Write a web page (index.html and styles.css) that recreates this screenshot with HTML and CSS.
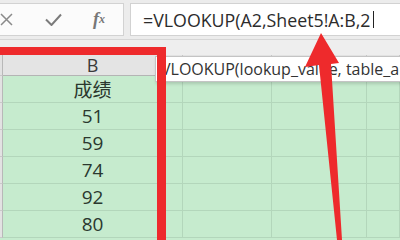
FILE: index.html
```html
<!DOCTYPE html>
<html>
<head>
<meta charset="utf-8">
<link rel="stylesheet" href="styles.css">
</head>
<body>
<div class="app">
  <div class="fbar">
    <div class="icons">
      <span class="ic ic-x"><svg width="13" height="13" viewBox="0 0 13 13"><path d="M1 1 L12 12 M12 1 L1 12" stroke="#8a8a8a" stroke-width="1.5" fill="none"/></svg></span>
      <span class="ic ic-ok"><svg width="17" height="13" viewBox="0 0 17 13"><path d="M1 6.5 L6.5 12 L16 1.5" stroke="#7b7b7b" stroke-width="2" fill="none"/></svg></span>
      <span class="ic ic-fx">f<small>x</small></span>
    </div>
    <div class="formula"><span class="ftext">=VLOOKUP(A2,Sheet5!A:B,2</span><span class="caret"></span></div>
  </div>
  <div class="gap"></div>
  <div class="grid">
    <div class="rh hd"></div><div class="cell hd">B</div><div class="cell hd"></div><div class="cell hd"></div><div class="cell hd"></div>
    <div class="rh"></div><div class="cell">成绩</div><div class="cell"></div><div class="cell"></div><div class="cell"></div>
    <div class="rh"></div><div class="cell">51</div><div class="cell"></div><div class="cell"></div><div class="cell"></div>
    <div class="rh"></div><div class="cell">59</div><div class="cell"></div><div class="cell"></div><div class="cell"></div>
    <div class="rh"></div><div class="cell">74</div><div class="cell"></div><div class="cell"></div><div class="cell"></div>
    <div class="rh"></div><div class="cell">92</div><div class="cell"></div><div class="cell"></div><div class="cell"></div>
    <div class="rh"></div><div class="cell">80</div><div class="cell"></div><div class="cell"></div><div class="cell"></div>
  </div>
  <div class="tip">VLOOKUP(lookup_value, table_array, col_index_num, [range_lookup])</div>
  <div class="redbox"></div>
  <svg class="arrow" width="400" height="240" viewBox="0 0 400 240"><polygon points="321,33 339,63 331,64 342,240 337,240 319,65 305,67" fill="#ee2a2c"/></svg>
</div>
</body>
</html>
```
FILE: styles.css
```css
* { box-sizing: border-box; }
html, body { margin: 0; padding: 0; }
body { width: 400px; height: 240px; overflow: hidden; background: #c6ebce; font-family: "Open Sans", "Noto Sans CJK SC", sans-serif; }
.app { position: relative; width: 400px; height: 240px; overflow: hidden; }
.fbar { height: 40px; background: #ececec; display: flex; padding: 3px 0 3px 0; gap: 6px; border-bottom: 1px solid #d6d6d6; }
.icons { width: 130px; margin-left: -6px; background: #fbfbfb; border: 1px solid #d2d2d2; display: flex; align-items: center; }
.ic { display: flex; align-items: center; justify-content: center; color: #7b7b7b; }
.ic-x { width: 13px; margin-left: 5px; }
.ic-ok { width: 17px; margin-left: 32px; }
.ic-fx { margin-left: 31px; font-family: "Liberation Serif", serif; font-style: italic; font-weight: bold; font-size: 18px; color: #777; }
.ic-fx small { font-size: 12px; }
.formula { flex: 1; background: #fff; border: 1px solid #d2d2d2; border-right: none; display: flex; align-items: center; padding-left: 12px; }
.ftext { font-size: 17.8px; color: #2c2c2c; white-space: nowrap; }
.caret { width: 1.5px; height: 17px; background: #222; margin-left: 2px; }
.gap { height: 15px; background: #eeeeee; }
.grid { display: grid; grid-template-columns: 3px 180px 89px 95px 1fr; grid-template-rows: 21px repeat(6, 27px); }
.rh { background: #e2e2e2; border-right: 1px solid #b8b8b8; border-bottom: 1px solid #c9c9c9; }
.cell { border-right: 1px solid #b3d6bb; border-bottom: 1px solid #b3d6bb; display: flex; align-items: center; justify-content: center; font-size: 19px; color: #2b382e; }
.cell.hd { background: #e4e4e4; color: #3a3a3a; border-right: 1px solid #c8c8c8; border-bottom: 1px solid #b4b4b4; font-size: 18px; }
.tip { position: absolute; left: 155px; top: 56px; height: 26px; width: 300px; background: #fff; border: 1px solid #c4c4c4; box-shadow: 1px 2px 3px rgba(0,0,0,0.15); font-size: 16px; color: #333; white-space: nowrap; overflow: hidden; padding-left: 5px; line-height: 24px; }
.redbox { position: absolute; left: -20px; top: 47px; width: 186px; height: 220px; border-top: 8px solid #ee2a2c; border-right: 9px solid #ee2a2c; }
.arrow { position: absolute; left: 0; top: 0; }
```
